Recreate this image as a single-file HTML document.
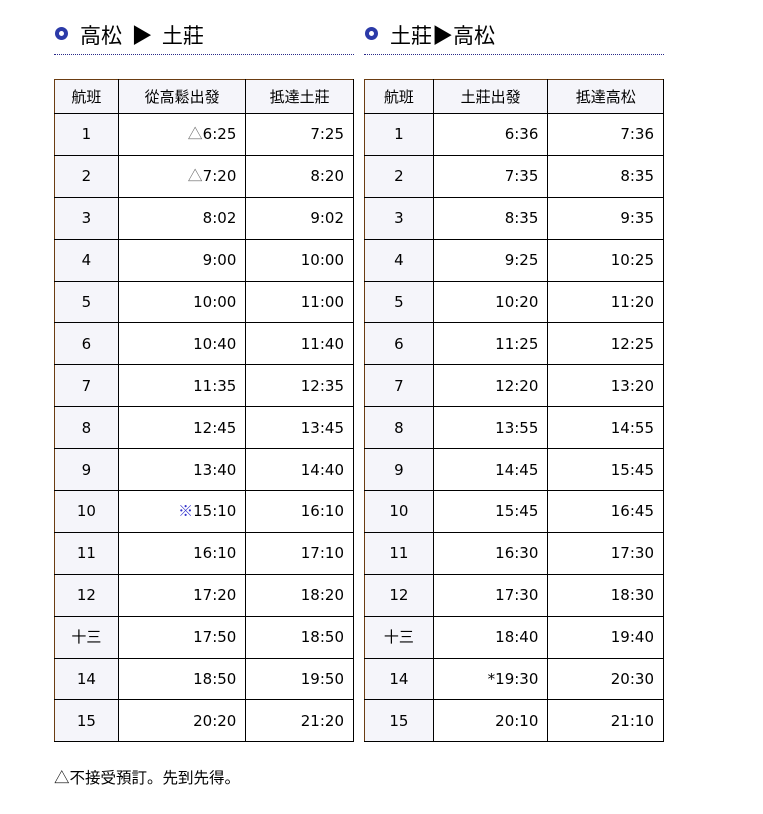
<!DOCTYPE html>
<html><head><meta charset="utf-8"><style>
body{margin:0;background:#fff;font-family:"DejaVu Sans","Noto Sans CJK JP",sans-serif;color:#000;}
.h{position:absolute;top:20px;height:34px;border-bottom:1px dotted #2a2a8a;font-size:21px;line-height:30px;}
.h i{display:inline-block;width:5px;height:5px;border:4px solid #2b3aa8;border-radius:50%;margin:0 12px 0 1px;vertical-align:3px;}
table{position:absolute;top:79px;border-collapse:collapse;font-size:15px;}
td{border:1px solid #000;height:40.9px;padding:0 9px;text-align:right;line-height:20px;vertical-align:middle;}
td span,td{white-space:nowrap;}
td:first-child{text-align:center;background:#f5f5fa;}
tr:first-child td{height:33px;text-align:center;background:#f5f5fa;font-size:15px;border-top-color:#6b3d12;font-family:"Noto Sans CJK JP",sans-serif;}
td:first-child{border-left-color:#6b3d12;}
.c{font-family:"Noto Sans CJK JP",sans-serif;line-height:20px;display:inline-block;height:20px;vertical-align:top;}
.n{position:absolute;top:766px;left:54px;font-size:15.5px;font-family:"Noto Sans CJK JP",sans-serif;}
</style></head><body>
<div class="h" style="left:54px;width:300px"><i></i><span style="font-family:'Noto Sans CJK JP',sans-serif">高松&nbsp; ▶&nbsp; 土莊</span></div>
<div class="h" style="left:364px;width:300px"><i></i><span style="font-family:'Noto Sans CJK JP',sans-serif">土莊▶高松</span></div>
<table style="left:54px;width:300px">
<colgroup><col style="width:64px"><col style="width:128px"><col style="width:108px"></colgroup>
<tr><td>航班</td><td>從高鬆出發</td><td>抵達土莊</td></tr>
<tr><td>1</td><td><span class="c" style="color:#666">△</span>6:25</td><td>7:25</td></tr>
<tr><td>2</td><td><span class="c" style="color:#666">△</span>7:20</td><td>8:20</td></tr>
<tr><td>3</td><td>8:02</td><td>9:02</td></tr>
<tr><td>4</td><td>9:00</td><td>10:00</td></tr>
<tr><td>5</td><td>10:00</td><td>11:00</td></tr>
<tr><td>6</td><td>10:40</td><td>11:40</td></tr>
<tr><td>7</td><td>11:35</td><td>12:35</td></tr>
<tr><td>8</td><td>12:45</td><td>13:45</td></tr>
<tr><td>9</td><td>13:40</td><td>14:40</td></tr>
<tr><td>10</td><td><span class="c" style="color:#33c">※</span>15:10</td><td>16:10</td></tr>
<tr><td>11</td><td>16:10</td><td>17:10</td></tr>
<tr><td>12</td><td>17:20</td><td>18:20</td></tr>
<tr><td><span class="c">十三</span></td><td>17:50</td><td>18:50</td></tr>
<tr><td>14</td><td>18:50</td><td>19:50</td></tr>
<tr><td>15</td><td>20:20</td><td>21:20</td></tr>
</table>
<table style="left:364px;width:300px">
<colgroup><col style="width:69px"><col style="width:115px"><col style="width:116px"></colgroup>
<tr><td>航班</td><td>土莊出發</td><td>抵達高松</td></tr>
<tr><td>1</td><td>6:36</td><td>7:36</td></tr>
<tr><td>2</td><td>7:35</td><td>8:35</td></tr>
<tr><td>3</td><td>8:35</td><td>9:35</td></tr>
<tr><td>4</td><td>9:25</td><td>10:25</td></tr>
<tr><td>5</td><td>10:20</td><td>11:20</td></tr>
<tr><td>6</td><td>11:25</td><td>12:25</td></tr>
<tr><td>7</td><td>12:20</td><td>13:20</td></tr>
<tr><td>8</td><td>13:55</td><td>14:55</td></tr>
<tr><td>9</td><td>14:45</td><td>15:45</td></tr>
<tr><td>10</td><td>15:45</td><td>16:45</td></tr>
<tr><td>11</td><td>16:30</td><td>17:30</td></tr>
<tr><td>12</td><td>17:30</td><td>18:30</td></tr>
<tr><td><span class="c">十三</span></td><td>18:40</td><td>19:40</td></tr>
<tr><td>14</td><td>*19:30</td><td>20:30</td></tr>
<tr><td>15</td><td>20:10</td><td>21:10</td></tr>
</table>
<div class="n">△不接受預訂。先到先得。</div>
</body></html>
